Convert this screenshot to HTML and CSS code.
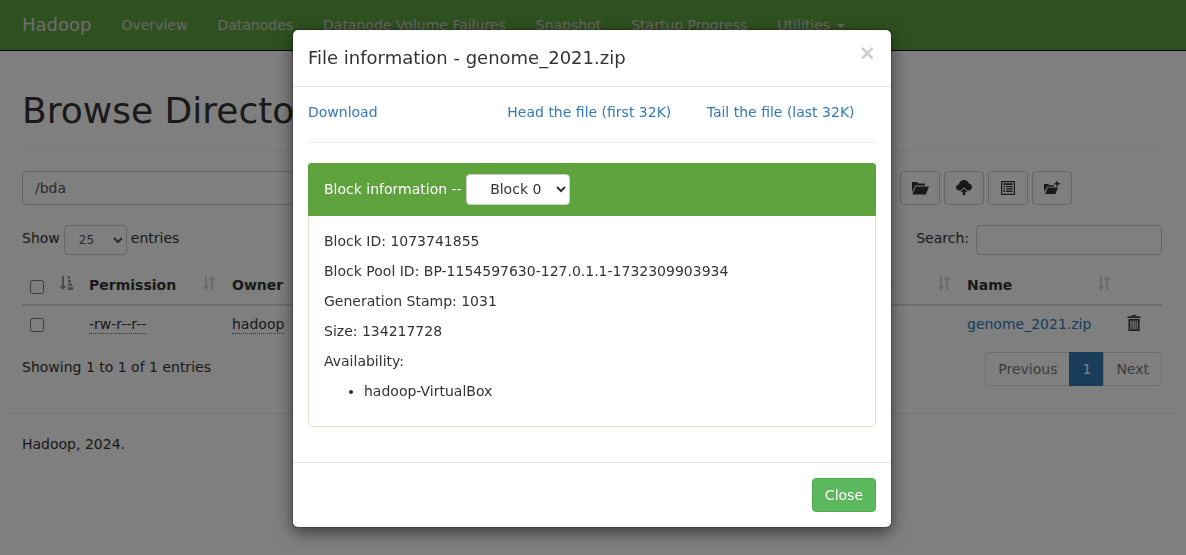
FILE: index.html
```html
<!DOCTYPE html>
<html lang="en">
<head>
<meta charset="utf-8">
<title>Browsing HDFS</title>
<link rel="stylesheet" href="styles.css">
</head>
<body>
<header class="navbar">
  <div class="container nav-row">
    <a class="brand">Hadoop</a>
    <a class="nav-link">Overview</a>
    <a class="nav-link">Datanodes</a>
    <a class="nav-link">Datanode Volume Failures</a>
    <a class="nav-link">Snapshot</a>
    <a class="nav-link">Startup Progress</a>
    <a class="nav-link">Utilities <span class="caret"></span></a>
  </div>
</header>
<main class="container">
  <div class="page-header"><h1>Browse Directory</h1></div>
  <div class="path-row">
    <input class="form-control path-input" type="text" value="/bda">
    <div class="tools">
      <button class="btn tool"><svg class="ico" width="18" height="14" viewBox="0 0 18 14"><path d="M1 1h5l1.5 1.5H14v2H4.2L1 11.5z"/><path d="M4.8 5.5H18l-3.2 8H1.4z"/></svg></button>
      <button class="btn tool"><svg class="ico" width="16" height="15" viewBox="0 0 16 15"><path d="M3.6 10.6C1.5 10.6 0 9.3 0 7.6c0-1.6 1.2-2.8 2.8-3C3.3 2 5.4 0 8 0c2.4 0 4.300 1.500 4.900 3.600 1.800.2 3.100 1.700 3.100 3.500 0 2-1.500 3.500-3.500 3.500h-1.300L8 7.300 4.800 10.600z"/><path d="M8 8.500l3.400 3.400H9.300V15H6.700v-3.100H4.600z"/></svg></button>
      <button class="btn tool"><svg class="ico" width="14" height="14" viewBox="0 0 14 14"><path fill-rule="evenodd" d="M0 0h14v14H0zM1.200 1.200v11.600h11.600V1.200z"/><path d="M2.300 2.300h9.400v1.800H2.300zM2.300 5h1.700v1.300H2.300zM5 5h6.700v1.300H5zM2.300 7.300h1.700v1.300H2.300zM5 7.300h6.700v1.300H5zM2.300 9.600h1.700v1.300H2.300zM5 9.600h6.700v1.300H5z"/></svg></button>
      <button class="btn tool"><svg class="ico" width="16" height="14" viewBox="0 0 16 14"><path d="M0 3h4l1 1.200h5v1.500H3.200L0 11z"/><path d="M3.800 6.600h10.200L11.500 13H1z"/><path d="M12.400 0h1.400v2h2v1.400h-2v2h-1.400v-2h-2V2h2z"/></svg></button>
    </div>
  </div>
  <div class="controls">
    <label class="show">Show <select class="form-control sel-sm"><option>25</option></select> entries</label>
    <label class="search">Search: <input class="form-control search-input" type="text"></label>
  </div>
  <table class="table">
    <colgroup>
      <col class="c-check"><col class="c-perm"><col class="c-owner"><col class="c-group"><col class="c-size"><col class="c-mod"><col class="c-rep"><col class="c-block"><col class="c-name"><col class="c-del">
    </colgroup>
    <thead>
      <tr>
        <th class="sort"><input type="checkbox" class="check"><svg class="sort-ico active" width="14" height="16" viewBox="0 0 14 16"><path d="M3 1h2v10h2.500L4 15 .5 11H3z"/><path d="M9 1h2v3H9zM9 5h3v2.500H9zM9 8.500h4V11H9zM9 12h5v3H9z"/></svg></th>
        <th class="sort">Permission<svg class="sort-ico" width="14" height="16" viewBox="0 0 14 16"><path d="M3 1h2v10h2.500L4 15 .5 11H3z"/><path d="M10 1l3.500 4H11v10H9V5H6.500z"/></svg></th>
        <th class="sort">Owner<svg class="sort-ico" width="14" height="16" viewBox="0 0 14 16"><path d="M3 1h2v10h2.500L4 15 .5 11H3z"/><path d="M10 1l3.500 4H11v10H9V5H6.500z"/></svg></th>
        <th class="sort">Group<svg class="sort-ico" width="14" height="16" viewBox="0 0 14 16"><path d="M3 1h2v10h2.500L4 15 .5 11H3z"/><path d="M10 1l3.500 4H11v10H9V5H6.500z"/></svg></th>
        <th class="sort">Size<svg class="sort-ico" width="14" height="16" viewBox="0 0 14 16"><path d="M3 1h2v10h2.500L4 15 .5 11H3z"/><path d="M10 1l3.500 4H11v10H9V5H6.500z"/></svg></th>
        <th class="sort">Last Modified<svg class="sort-ico" width="14" height="16" viewBox="0 0 14 16"><path d="M3 1h2v10h2.500L4 15 .5 11H3z"/><path d="M10 1l3.500 4H11v10H9V5H6.500z"/></svg></th>
        <th class="sort">Replication<svg class="sort-ico" width="14" height="16" viewBox="0 0 14 16"><path d="M3 1h2v10h2.500L4 15 .5 11H3z"/><path d="M10 1l3.500 4H11v10H9V5H6.500z"/></svg></th>
        <th class="sort">Block Size<svg class="sort-ico" width="14" height="16" viewBox="0 0 14 16"><path d="M3 1h2v10h2.500L4 15 .5 11H3z"/><path d="M10 1l3.500 4H11v10H9V5H6.500z"/></svg></th>
        <th class="sort">Name<svg class="sort-ico" width="14" height="16" viewBox="0 0 14 16"><path d="M3 1h2v10h2.500L4 15 .5 11H3z"/><path d="M10 1l3.500 4H11v10H9V5H6.500z"/></svg></th>
        <th></th>
      </tr>
    </thead>
    <tbody>
      <tr>
        <td><input type="checkbox" class="check"></td>
        <td><span class="tip">-rw-r--r--</span></td>
        <td><span class="tip">hadoop</span></td>
        <td><span class="tip">supergroup</span></td>
        <td>128 MB</td>
        <td>Nov 22 14:20</td>
        <td><span class="tip">1</span></td>
        <td>128 MB</td>
        <td><a class="link">genome_2021.zip</a></td>
        <td class="del"><svg class="ico" width="14" height="16" viewBox="0 0 14 16"><path d="M5 0h4l.8 1.500H13.500V3H.5V1.500H4.200zM5.600 1h2.800l.2.500H5.400z" fill-rule="evenodd"/><path fill-rule="evenodd" d="M1.500 4h11v12h-11zM3.300 5.500v9h1.200v-9zM5.500 5.500v9h1.200v-9zM7.500 5.500v9h1.200v-9zM9.600 5.500v9h1.200v-9z"/></svg></td>
      </tr>
    </tbody>
  </table>
  <div class="table-foot">
    <div class="info">Showing 1 to 1 of 1 entries</div>
    <ul class="pagination">
      <li class="page">Previous</li>
      <li class="page current">1</li>
      <li class="page">Next</li>
    </ul>
  </div>
  <hr class="foot-rule">
  <footer class="footer">Hadoop, 2024.</footer>
</main>

<div class="backdrop"></div>

<div class="modal">
  <div class="modal-head">
    <button class="close">×</button>
    <h4 class="modal-title">File information - genome_2021.zip</h4>
  </div>
  <div class="modal-body">
    <div class="links">
      <a class="modal-link">Download</a>
      <a class="modal-link">Head the file (first 32K)</a>
      <a class="modal-link">Tail the file (last 32K)</a>
    </div>
    <hr class="rule">
    <section class="panel">
      <div class="panel-heading">Block information -- <select class="block-select"><option>Block 0</option></select></div>
      <div class="panel-body">
        <p>Block ID: 1073741855</p>
        <p>Block Pool ID: BP-1154597630-127.0.1.1-1732309903934</p>
        <p>Generation Stamp: 1031</p>
        <p>Size: 134217728</p>
        <p>Availability:</p>
        <ul><li>hadoop-VirtualBox</li></ul>
      </div>
    </section>
  </div>
  <div class="modal-foot"><button class="btn-success">Close</button></div>
</div>
</body>
</html>
```
FILE: styles.css
```css
* { box-sizing: border-box; }
html, body { height: 100%; }
body {
  margin: 0;
  overflow: hidden;
  width: 1186px;
  background: #fff;
  color: #333;
  font: 14px/20px "DejaVu Sans", sans-serif;
}
.container { width: 1170px; margin-left: 7px; padding: 0 15px; }

.navbar { height: 51px; background: #5fa33e; border-bottom: 1px solid #080808; margin-bottom: 20px; }
.nav-row { display: flex; }
.brand { font-size: 18px; line-height: 20px; padding: 15px 15px 15px 0; color: #ddd; }
.nav-link { padding: 15px; color: #ccc; }
.caret { display: inline-block; width: 0; height: 0; margin-left: 2px; vertical-align: middle; border-top: 4px solid; border-left: 4px solid transparent; border-right: 4px solid transparent; }

.page-header { margin: 40px 0 20px; padding-bottom: 9px; border-bottom: 1px solid #eee; }
h1 { margin: 0 0 10px; font-size: 36px; font-weight: 500; line-height: 39.6px; }

.form-control { height: 34px; padding: 6px 12px; border: 1px solid #ccc; border-radius: 4px; background: #fff; color: #555; font: inherit; }
.path-row { display: flex; justify-content: space-between; }
.path-input { width: 860px; }
.tools { display: flex; gap: 4px; margin-right: 90px; }
.btn { display: flex; align-items: center; justify-content: center; width: 40px; height: 34px; padding: 0; background: #fff; border: 1px solid #ccc; border-radius: 4px; }
.ico { fill: #333; display: block; }

.controls { display: flex; justify-content: space-between; margin-top: 20px; height: 30px; }
.show { display: flex; align-items: flex-start; gap: 4px; line-height: 26px; }
.sel-sm { width: 63px; height: 30px; padding: 5px 10px; font-size: 12px; line-height: 18px; }
.search { display: flex; align-items: flex-start; gap: 7px; line-height: 26px; }
.search-input { width: 186px; height: 30px; }

.table { width: 1140px; margin-top: 12px; border-collapse: collapse; table-layout: fixed; }
.c-check { width: 59px; } .c-perm { width: 143px; } .c-owner { width: 100px; } .c-group { width: 110px; }
.c-size { width: 90px; } .c-mod { width: 180px; } .c-rep { width: 100px; } .c-block { width: 155px; }
.c-name { width: 160px; } .c-del { width: 43px; }
th { position: relative; height: 38px; padding: 8px; text-align: left; font-weight: 700; line-height: 20px; border-bottom: 2px solid #ddd; white-space: nowrap; }
td { height: 36px; padding: 8px; line-height: 20px; white-space: nowrap; }
.check { display: block; width: 14px; height: 14px; margin: 3px 0 0; }
.sort-ico { position: absolute; right: 8px; top: 8px; fill: #333; opacity: .2; }
.sort-ico.active { opacity: .5; }
.tip { border-bottom: 1px dotted #0f86c0; display: inline-block; line-height: 18px; }
.link { color: #337ab7; }
.del { padding-top: 7px; }

.table-foot { display: flex; justify-content: space-between; margin-top: 10px; }
.info { padding-top: 5px; }
.pagination { display: flex; list-style: none; margin: 0; padding: 0; }
.page { height: 34px; padding: 6px 12px; border: 1px solid #ddd; margin-left: -1px; color: #777; background: #fff; }
.page:first-child { border-radius: 4px 0 0 4px; margin-left: 0; }
.page:last-child { border-radius: 0 4px 4px 0; }
.page.current { background: #337ab7; border-color: #337ab7; color: #fff; }

.foot-rule { margin: 27px -15px 20px; border: 0; border-top: 1px solid #eee; }
.footer { line-height: 20px; }

.backdrop { position: fixed; inset: 0; background: rgba(0,0,0,.5); }

.modal {
  position: absolute;
  left: 292px;
  top: 29px;
  width: 600px;
  background: #fff;
  background-clip: padding-box;
  border: 1px solid rgba(0,0,0,.2);
  border-radius: 6px;
  box-shadow: 0 5px 15px rgba(0,0,0,.5);
}
.modal-head { padding: 15px; border-bottom: 1px solid #e5e5e5; }
.modal-title { margin: 0; font-size: 18px; font-weight: 500; line-height: 25.7px; }
.close { float: right; margin-top: -2px; padding: 0; background: none; border: 0; font: 700 21px/21px "DejaVu Sans", sans-serif; color: #000; opacity: .2; }
.modal-body { padding: 15px; }
.links { display: grid; grid-template-columns: repeat(3, 1fr); margin: 0 -15px; }
.modal-link { padding: 0 15px; color: #337ab7; }
.rule { margin: 20px 0; border: 0; border-top: 1px solid #eee; }
.panel { margin-bottom: 20px; border: 1px solid #d6e9c6; border-radius: 4px; }
.panel-heading { padding: 10px 15px; background: #5fa33e; color: #fff; border-radius: 3px 3px 0 0; margin: -1px -1px 0; border: 1px solid #5fa33e; }
.block-select { width: 104px; height: 31px; padding: 0 0 0 19px; background: #fff; color: #333; border: 1px solid #ccc; border-radius: 4px; font: inherit; vertical-align: middle; }
.panel-body { padding: 15px; }
.panel-body p { margin: 0 0 10px; }
.panel-body ul { margin: 0 0 10px; padding-left: 40px; }
.modal-foot { padding: 15px; border-top: 1px solid #e5e5e5; text-align: right; }
.btn-success { height: 34px; padding: 6px 12px; background: #5cb85c; border: 1px solid #4cae4c; border-radius: 4px; color: #fff; font: inherit; }
```
